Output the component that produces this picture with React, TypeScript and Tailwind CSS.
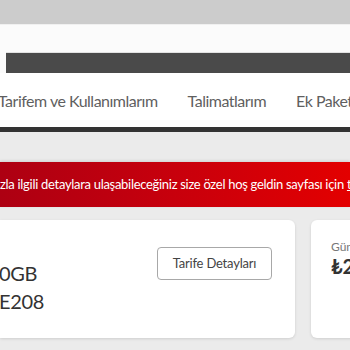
const navItems = ['Tarifem ve Kullanımlarım', 'Talimatlarım', 'Ek Paketlerim']

const App = () => {
  return (
    <div className="w-[350px] h-[350px] overflow-hidden bg-[#ebebeb] font-['Lato',sans-serif] text-[#333]">
      {/* üst gri bant */}
      <div className="h-[24px] bg-[#cccccc]" />

      {/* header */}
      <div className="bg-[#fbfbfb] pt-[27px] border-t border-[#f0f0f0]">
        <div className="ml-[6px] h-[21px] bg-[#4a4a4a] border-t border-[#e2e2e2]" />
        <div className="bg-white h-[54px] flex items-center gap-[30px] -ml-[2px] pt-[2px] whitespace-nowrap">
          {navItems.map((item) => (
            <span key={item} className="text-[16px] tracking-[-0.5px] text-[#5f5f5f]">
              {item}
            </span>
          ))}
        </div>
        <div className="h-[5px] bg-[#333333]" />
      </div>

      {/* kırmızı bilgi bandı */}
      <div className="mt-[30px] h-[45px] flex items-center bg-gradient-to-r from-[#ad0012] to-[#e30000] shadow-[0_-1px_3px_rgba(0,0,0,0.12)] whitespace-nowrap">
        <p className="text-[13px] tracking-[-0.3px] text-white">
          zla ilgili detaylara ulaşabileceğiniz size özel hoş geldin sayfası için{' '}
          <span className="underline">tıklayın</span>
        </p>
      </div>

      {/* kartlar */}
      <div className="mt-[13px] flex gap-[16px]">
        <div className="w-[295px] h-[118px] shrink-0 bg-white rounded-r-[6px] shadow-[0_1px_3px_rgba(0,0,0,0.12)] flex justify-between pr-[23px] pt-[27px]">
          <div className="-ml-[1px] flex flex-col gap-[6px] pt-[15px] text-[20px] leading-[22px] tracking-[-0.3px] text-[#333]">
            <span>0GB</span>
            <span>E208</span>
          </div>
          <button className="h-[33px] w-[115px] border border-[#a8a8a8] rounded-[4px] bg-white text-[13px] tracking-[-0.2px] text-[#444]">
            Tarife Detayları
          </button>
        </div>
        <div className="w-[200px] h-[118px] shrink-0 bg-white rounded-l-[6px] shadow-[0_1px_3px_rgba(0,0,0,0.12)] pl-[20px] pt-[19px]">
          <p className="text-[12px] leading-[16px] text-[#777]">Güncel Fatura</p>
          <p className="text-[20px] leading-[22px] font-bold text-[#333]">₺209,90</p>
        </div>
      </div>
    </div>
  )
}

export default App
